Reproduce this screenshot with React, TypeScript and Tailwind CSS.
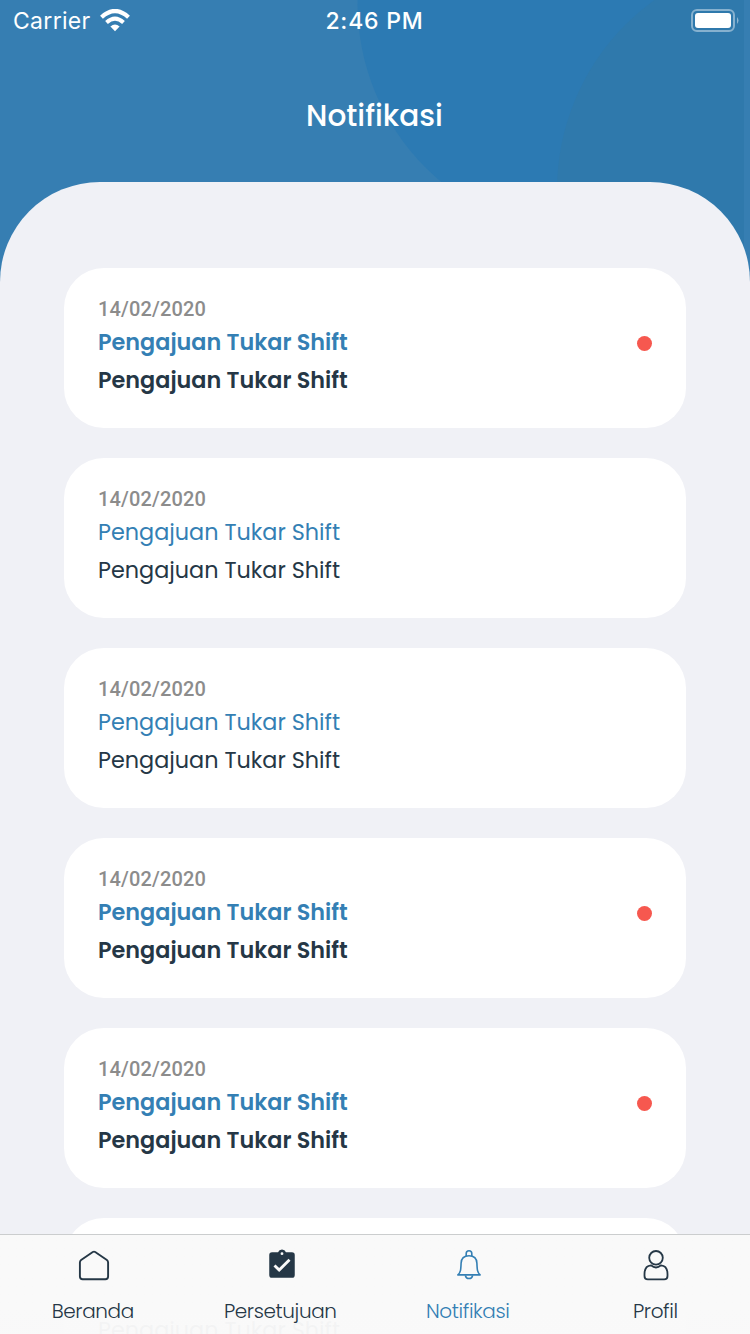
import React from "react";

type Notice = { date: string; title: string; body: string; unread: boolean };

const notices: Notice[] = [true, false, false, true, true, false].map((unread) => ({
  date: "14/02/2020",
  title: "Pengajuan Tukar Shift",
  body: "Pengajuan Tukar Shift",
  unread,
}));

function StatusBar() {
  return (
    <div className="grid h-10 grid-cols-3 items-center pl-[13px] pr-[11px] text-white">
      <div className="flex items-center gap-[9px]">
        <span className="w-[78px] whitespace-nowrap pt-px text-[23px] leading-10 tracking-[0.3px]">Carrier</span>
        <svg width="30" height="23" viewBox="0 0 30 23" fill="none">
          <path d="M1.5 8.2Q15-4.2 28.5 8.2" stroke="white" strokeWidth="4.2" />
          <path d="M6.5 13.5Q15 5.7 23.5 13.5" stroke="white" strokeWidth="4" />
          <path d="M15 22.2L10.4 17.6Q15 13.6 19.6 17.6Z" fill="white" />
        </svg>
      </div>
      <span className="pr-[3px] pt-px text-center text-[23px] font-medium leading-10 tracking-[0.8px]">2:46 PM</span>
      <svg className="justify-self-end" width="48" height="24" viewBox="0 0 48 24" fill="none">
        <rect x="1" y="1" width="42" height="21" rx="5" stroke="white" strokeOpacity=".42" strokeWidth="2" />
        <rect x="4" y="4" width="36" height="15" rx="3" fill="white" />
        <path d="M46 8Q49 11.5 46 15Z" fill="white" fillOpacity=".45" />
      </svg>
    </div>
  );
}

function NoticeCard({ date, title, body, unread }: Notice) {
  return (
    <article className="flex h-40 shrink-0 items-center justify-between rounded-[40px] bg-white px-[34px]">
      <div className={unread ? "h-[108px] whitespace-nowrap text-[22.33px] font-semibold" : "h-[108px] whitespace-nowrap text-[22.33px] font-normal"}>
        <p className="h-[31px] font-['Roboto',sans-serif] text-[20px] font-medium leading-[30px] tracking-[0.15px] text-[#8c8c8c]">{date}</p>
        <p className="h-[38px] leading-[36px] text-[#347fb4]">{title}</p>
        <p className="h-[38px] leading-[36px] text-[#253746]">{body}</p>
      </div>
      {unread && <span className="mt-[-10px] size-[15px] rounded-full bg-[#f6584f]" />}
    </article>
  );
}

function HomeIcon() {
  return (
    <svg width="32" height="32" viewBox="0 0 32 32" fill="none" stroke="currentColor" strokeWidth="1.9" strokeLinejoin="round">
      <path d="M1.9 13.4Q1.9 11.9 3.1 11L14.8 3Q16 2.2 17.2 3L28.9 11Q30.1 11.9 30.1 13.4V27.5Q30.1 30.2 27.4 30.2H4.6Q1.9 30.2 1.9 27.5Z" />
    </svg>
  );
}

function ClipboardIcon() {
  return (
    <svg className="ml-[2px] shrink-0" width="34" height="34" viewBox="0 0 24 24" fill="currentColor">
      <path fillRule="evenodd" d="M19 3h-4.2a3 3 0 0 0-5.6 0H5a2 2 0 0 0-2 2v14a2 2 0 0 0 2 2h14a2 2 0 0 0 2-2V5a2 2 0 0 0-2-2Zm-7 0a1 1 0 1 1 0 2 1 1 0 0 1 0-2Zm-2 14-4-4 1.4-1.4L10 14.2l6.6-6.6L18 9Z" />
    </svg>
  );
}

function BellIcon() {
  return (
    <svg width="32" height="32" viewBox="0 0 32 32" fill="none" stroke="currentColor" strokeWidth="1.6" strokeLinejoin="round">
      <path d="M13.2 6.9V4.6a2.8 2.8 0 0 1 5.6 0v2.3" />
      <path d="M4.9 25.9H27.1C24.3 23.3 24.2 21 23.9 14.2C23.7 9.2 20.5 6.8 16 6.8S8.3 9.2 8.1 14.2C7.8 21 7.7 23.3 4.9 25.9Z" />
      <path d="M12.3 26.3a3.8 4.2 0 0 0 7.4 0" />
    </svg>
  );
}

function ProfileIcon() {
  return (
    <svg width="32" height="32" viewBox="0 0 32 32" fill="none" stroke="currentColor" strokeWidth="1.8" strokeLinejoin="round">
      <circle cx="16" cy="8.8" r="6.8" />
      <path d="M11 16.3Q4.6 16.7 4.5 25V27Q4.5 30.4 7.8 30.4H24.2Q27.5 30.4 27.5 27V25Q27.4 16.7 21 16.3Q16 20.6 11 16.3Z" />
    </svg>
  );
}

const tabs = [
  { label: "Beranda", icon: <HomeIcon />, color: "text-[#253746]" },
  { label: "Persetujuan", icon: <ClipboardIcon />, color: "text-[#253746]" },
  { label: "Notifikasi", icon: <BellIcon />, color: "text-[#347fb4]" },
  { label: "Profil", icon: <ProfileIcon />, color: "text-[#253746]" },
];

export default function App() {
  return (
    <div className="relative flex h-[1334px] w-[750px] flex-col overflow-hidden bg-[#367eb2] font-['Poppins','Inter',sans-serif]">
      <svg className="absolute left-0 top-0" width="744" height="300" viewBox="0 0 744 300">
        <circle cx="590.5" cy="3" r="233" fill="#2c7ab3" />
        <circle cx="791" cy="190" r="234" fill="#2f79ac" />
      </svg>
      <header className="relative h-[182px] shrink-0 font-['Inter',sans-serif]">
        <StatusBar />
        <h1 className="mt-[51px] pr-px text-center font-['Poppins','Inter',sans-serif] text-[29.6px] font-medium leading-[50px] text-white">Notifikasi</h1>
      </header>
      <main className="relative flex min-h-0 flex-1 flex-col gap-[30px] overflow-hidden rounded-t-[100px] bg-[#f0f1f6] px-16 pt-[86px]">
        {notices.map((notice, index) => (
          <NoticeCard key={index} {...notice} />
        ))}
      </main>
      <nav className="absolute inset-x-0 bottom-0 grid h-[100px] grid-cols-4 border-t border-[#cbcdce] bg-linear-to-b from-[#f9f9f9] from-75% to-[#f9f9f9]/97 to-90%">
        {tabs.map(({ label, icon, color }) => (
          <div key={label} className={`flex flex-col items-center pt-[14px] ${color}`}>
            <span className="flex h-8 w-8 items-center justify-center">{icon}</span>
            <span className="mt-[15px] whitespace-nowrap pr-[2px] text-[20px] font-light leading-[30px] tracking-[-0.38px]">{label}</span>
          </div>
        ))}
      </nav>
    </div>
  );
}
